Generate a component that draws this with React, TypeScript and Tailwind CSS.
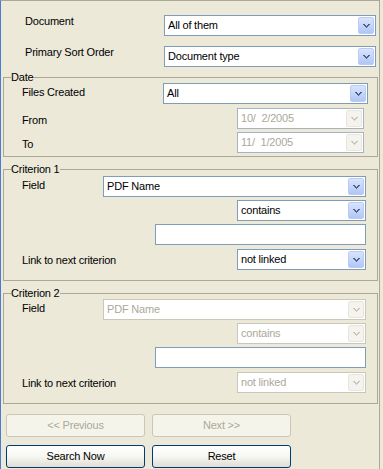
import React from 'react'

// XP-style search options panel

function Chevron({ disabled }: { disabled?: boolean }) {
    return (
        <svg width="7" height="4" viewBox="0 0 7 4" shapeRendering="crispEdges">
            <path
                d="M0 0h2v1H0zM5 0h2v1H5zM1 1h2v1H1zM4 1h2v1H4zM2 2h3v1H2zM3 3h1v1H3z"
                fill={disabled ? '#C9C7BA' : '#4D6185'}
            />
        </svg>
    )
}

interface ComboProps {
    value: string
    className: string
    disabled?: boolean
    date?: boolean
}

function Combo({ value, className, disabled, date }: ComboProps) {
    const border = disabled
        ? date
            ? 'border-[#A7B3C0]'
            : 'border-[#C9C7BA]'
        : 'border-[#7F9DB9]'

    return (
        <div className={`flex h-[21px] shrink-0 border bg-white ${border} ${className}`}>
            <span
                className={`flex flex-1 items-center whitespace-pre pl-[3px] ${disabled ? 'text-[#ACA899]' : 'text-black'}`}
            >
                {value}
            </span>
            <div
                className={`m-[1px] flex w-[16px] items-center justify-center rounded-[2px] border ${
                    disabled
                        ? 'border-[#E8E6DC] bg-[#F4F3EE]'
                        : 'border-[#BACCF5] bg-gradient-to-b from-[#D9E4FD] to-[#B2C6F5]'
                }`}
            >
                <Chevron disabled={disabled} />
            </div>
        </div>
    )
}

function PushButton({ label, disabled }: { label: string; disabled?: boolean }) {
    return (
        <button
            className={`h-[23px] w-[139px] rounded-[3px] border text-center text-[11px] leading-[13px] ${
                disabled
                    ? 'border-[#C9C7BA] bg-[#F5F4EA] text-[#ACA899]'
                    : 'border-[#003C74] bg-gradient-to-b from-white via-[#F6F6F2] to-[#E0DED3] text-black'
            }`}
        >
            {label}
        </button>
    )
}

function CriterionBox({ title, disabled, first }: { title: string; disabled?: boolean; first?: boolean }) {
    return (
        <fieldset className="ml-[2px] mt-[6px] w-[375px] border border-[#ACA899] pb-[10px]">
            <legend className="ml-[7px]">{title}</legend>
            <div className={`flex pl-[18px] ${first ? '' : '-mt-[1px]'}`}>
                <span className="mt-[3px] w-[81px] shrink-0">Field</span>
                <Combo value="PDF Name" className="w-[263px]" disabled={disabled} />
            </div>
            <div className="mt-[3px] flex pl-[233px]">
                <Combo value="contains" className="w-[129px]" disabled={disabled} />
            </div>
            <div className="mt-[3px] flex pl-[151px]">
                <div className="h-[21px] w-[211px] border border-[#7F9DB9] bg-white" />
            </div>
            <div className="mt-[4px] flex pl-[18px]">
                <span className="mt-[5px] w-[215px] shrink-0">Link to next criterion</span>
                <Combo value="not linked" className="w-[129px]" disabled={disabled} />
            </div>
        </fieldset>
    )
}

export default function App() {
    return (
        <div className="h-[469px] w-[383px] bg-[#ECE9D8] font-['Liberation_Sans',Arial,sans-serif] text-[11px] leading-[13px] tracking-[-0.2px] text-black">
            <div className="h-[469px] w-[380px] border-l border-r border-t border-l-[#4A7BD3] border-r-[#ACA899] border-t-[#ACA899]">
                {/* Top options */}
                <div className="flex flex-col pl-[24px] pt-[14px]">
                    <div className="flex h-[21px]">
                        <span className="w-[139px] shrink-0">Document</span>
                        <Combo value="All of them" className="w-[212px]" />
                    </div>
                    <div className="mt-[10px] flex h-[21px]">
                        <span className="w-[139px] shrink-0">Primary Sort Order</span>
                        <Combo value="Document type" className="w-[212px]" />
                    </div>
                </div>

                {/* Date */}
                <fieldset className="ml-[2px] mt-[4px] w-[375px] border border-[#ACA899] pb-[3px]">
                    <legend className="ml-[7px]">Date</legend>
                    <div className="-mt-[1px] flex pl-[18px]">
                        <span className="mt-[3px] w-[141px] shrink-0">Files Created</span>
                        <Combo value="All" className="w-[205px]" />
                    </div>
                    <div className="mt-[4px] flex pl-[18px]">
                        <span className="mt-[6px] w-[215px] shrink-0">From</span>
                        <Combo value="10/  2/2005" className="w-[127px]" disabled date />
                    </div>
                    <div className="mt-[3px] flex pl-[18px]">
                        <span className="mt-[6px] w-[215px] shrink-0">To</span>
                        <Combo value="11/  1/2005" className="w-[127px]" disabled date />
                    </div>
                </fieldset>

                <CriterionBox title="Criterion 1" first />
                <CriterionBox title="Criterion 2" disabled />

                {/* Buttons */}
                <div className="ml-[5px] mt-[10px] flex gap-[7px]">
                    <PushButton label="<< Previous" disabled />
                    <PushButton label="Next >>" disabled />
                </div>
                <div className="ml-[5px] mt-[8px] flex gap-[7px]">
                    <PushButton label="Search Now" />
                    <PushButton label="Reset" />
                </div>
            </div>
        </div>
    )
}
